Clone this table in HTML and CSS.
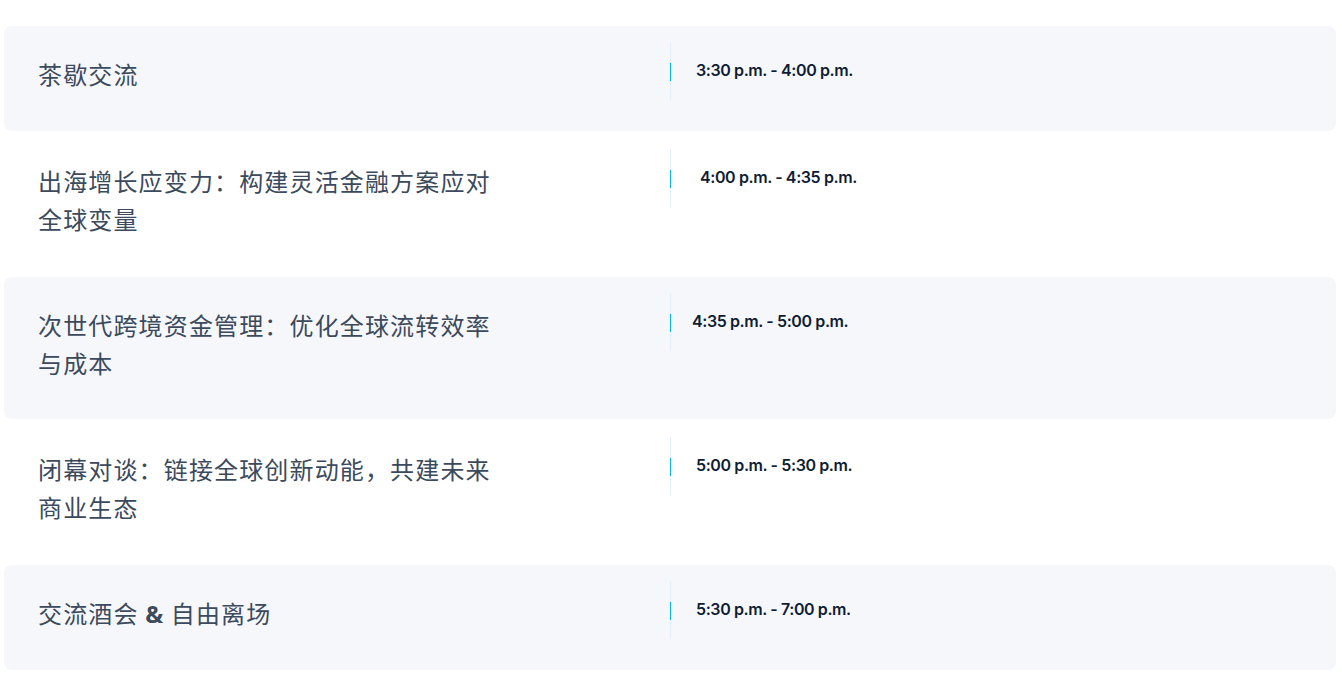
FILE: index.html
```html
<!DOCTYPE html>
<html lang="zh">
<head>
<meta charset="utf-8">
<title>Agenda</title>
<link rel="stylesheet" href="styles.css">
</head>
<body>
<div class="agenda">
  <div class="row shaded">
    <div class="title">茶歇交流</div>
    <div class="when"><span class="rule"></span><span class="time">3:30 p.m. - 4:00 p.m.</span></div>
  </div>
  <div class="row plain">
    <div class="title">出海增长应变力：构建灵活金融方案应对全球变量</div>
    <div class="when"><span class="rule"></span><span class="time shift-r">4:00 p.m. - 4:35 p.m.</span></div>
  </div>
  <div class="row shaded">
    <div class="title">次世代跨境资金管理：优化全球流转效率与成本</div>
    <div class="when"><span class="rule"></span><span class="time shift-l">4:35 p.m. - 5:00 p.m.</span></div>
  </div>
  <div class="row plain">
    <div class="title">闭幕对谈：链接全球创新动能，共建未来商业生态</div>
    <div class="when"><span class="rule"></span><span class="time">5:00 p.m. - 5:30 p.m.</span></div>
  </div>
  <div class="row shaded">
    <div class="title">交流酒会 <b>&amp;</b> 自由离场</div>
    <div class="when"><span class="rule"></span><span class="time">5:30 p.m. - 7:00 p.m.</span></div>
  </div>
</div>
</body>
</html>
```
FILE: styles.css
```css
html, body {
  margin: 0;
  padding: 0;
  background: #ffffff;
}
.agenda {
  padding: 26px 6px 0 4px;
  display: flex;
  flex-direction: column;
}
.row {
  display: flex;
  align-items: flex-start;
  border-radius: 8px;
  min-height: 105px;
}
.row.shaded {
  background: #f6f7fb;
}
.title {
  width: 460px;
  margin-right: 172px;
  padding: 29px 0 37px 34px;
  font-family: "Noto Sans CJK SC", "Noto Sans", sans-serif;
  font-size: 24px;
  letter-spacing: 1.15px;
  line-height: 38px;
  color: #3b4a5c;
}
.row.plain .title {
  padding-top: 31px;
  padding-bottom: 39px;
}
.title b {
  font-family: "Noto Sans", "Noto Sans CJK SC", sans-serif;
  font-weight: 700;
}
.when {
  display: flex;
  align-items: flex-start;
  padding-top: 16px;
}
.row.plain .when {
  padding-top: 18px;
}
.rule {
  display: block;
  width: 1px;
  height: 58px;
  background: linear-gradient(to bottom, #e4eef6 0, #e4eef6 21px, #00b8ec 21px, #00b8ec 39px, #e4eef6 39px, #e4eef6 58px);
}
.time {
  margin: 18px 0 0 25px;
  font-family: Inter, "Liberation Sans", sans-serif;
  font-weight: 600;
  font-size: 16px;
  letter-spacing: -0.4px;
  line-height: 20px;
  color: #0f1d33;
}
.time.shift-r { margin-left: 29px; }
.time.shift-l { margin-left: 21px; }
```
